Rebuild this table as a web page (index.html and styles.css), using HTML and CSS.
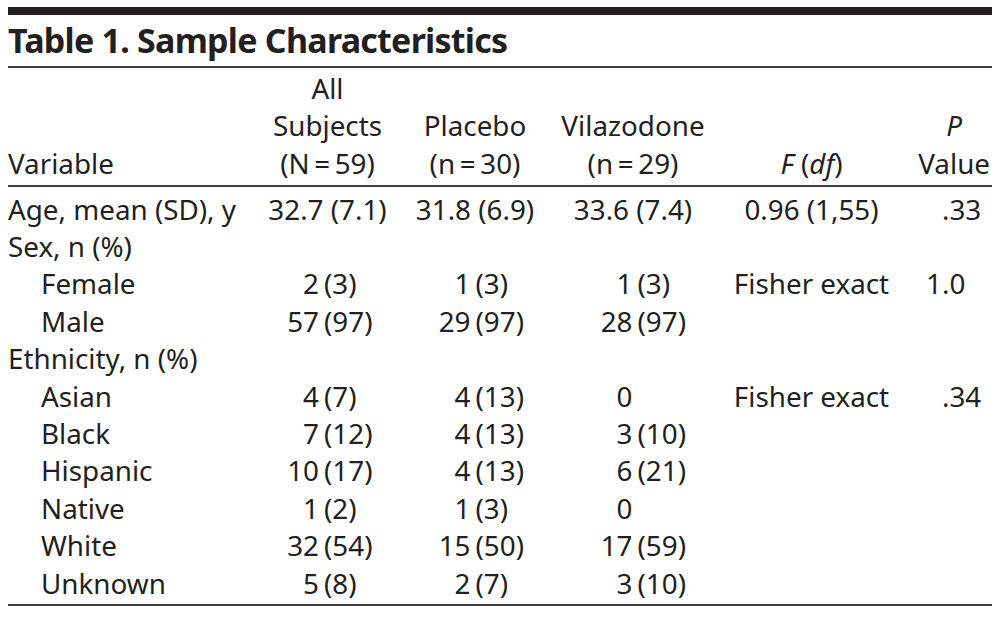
FILE: index.html
```html
<!DOCTYPE html>
<html lang="en">
<head>
<meta charset="utf-8">
<title>Table 1. Sample Characteristics</title>
<link rel="stylesheet" href="styles.css">
</head>
<body>
<div class="table">
  <div class="topbar"></div>
  <h1 class="title">Table 1. Sample Characteristics</h1>

  <div class="row head">
    <div class="cell">Variable</div>
    <div class="cell hc">All<br>Subjects<br>(N&thinsp;=&thinsp;59)</div>
    <div class="cell hc">Placebo<br>(n&thinsp;=&thinsp;30)</div>
    <div class="cell hc">Vilazodone<br>(n&thinsp;=&thinsp;29)</div>
    <div class="cell hc"><i>F</i> (<i>df</i>)</div>
    <div class="cell hp"><span class="pv"><i>P</i><span>Value</span></span></div>
  </div>

  <div class="tbody">
    <div class="row">
      <div class="cell">Age, mean (SD), y</div>
      <div class="cell c">32.7 (7.1)</div>
      <div class="cell c">31.8 (6.9)</div>
      <div class="cell c">33.6 (7.4)</div>
      <div class="cell c">0.96 (1,55)</div>
      <div class="cell dec"><span class="i"></span><span class="f">.33</span></div>
    </div>
    <div class="row">
      <div class="cell">Sex, n (%)</div>
      <div class="cell"></div><div class="cell"></div><div class="cell"></div><div class="cell"></div><div class="cell"></div>
    </div>
    <div class="row">
      <div class="cell ind">Female</div>
      <div class="cell num k1"><span class="n">2</span><span class="p">(3)</span></div>
      <div class="cell num k2"><span class="n">1</span><span class="p">(3)</span></div>
      <div class="cell num k3"><span class="n">1</span><span class="p">(3)</span></div>
      <div class="cell c">Fisher exact</div>
      <div class="cell dec"><span class="i">1</span><span class="f">.0</span></div>
    </div>
    <div class="row">
      <div class="cell ind">Male</div>
      <div class="cell num k1"><span class="n">57</span><span class="p">(97)</span></div>
      <div class="cell num k2"><span class="n">29</span><span class="p">(97)</span></div>
      <div class="cell num k3"><span class="n">28</span><span class="p">(97)</span></div>
      <div class="cell"></div><div class="cell"></div>
    </div>
    <div class="row">
      <div class="cell">Ethnicity, n (%)</div>
      <div class="cell"></div><div class="cell"></div><div class="cell"></div><div class="cell"></div><div class="cell"></div>
    </div>
    <div class="row">
      <div class="cell ind">Asian</div>
      <div class="cell num k1"><span class="n">4</span><span class="p">(7)</span></div>
      <div class="cell num k2"><span class="n">4</span><span class="p">(13)</span></div>
      <div class="cell num k3"><span class="n">0</span><span class="p"></span></div>
      <div class="cell c">Fisher exact</div>
      <div class="cell dec"><span class="i"></span><span class="f">.34</span></div>
    </div>
    <div class="row">
      <div class="cell ind">Black</div>
      <div class="cell num k1"><span class="n">7</span><span class="p">(12)</span></div>
      <div class="cell num k2"><span class="n">4</span><span class="p">(13)</span></div>
      <div class="cell num k3"><span class="n">3</span><span class="p">(10)</span></div>
      <div class="cell"></div><div class="cell"></div>
    </div>
    <div class="row">
      <div class="cell ind">Hispanic</div>
      <div class="cell num k1"><span class="n">10</span><span class="p">(17)</span></div>
      <div class="cell num k2"><span class="n">4</span><span class="p">(13)</span></div>
      <div class="cell num k3"><span class="n">6</span><span class="p">(21)</span></div>
      <div class="cell"></div><div class="cell"></div>
    </div>
    <div class="row">
      <div class="cell ind">Native</div>
      <div class="cell num k1"><span class="n">1</span><span class="p">(2)</span></div>
      <div class="cell num k2"><span class="n">1</span><span class="p">(3)</span></div>
      <div class="cell num k3"><span class="n">0</span><span class="p"></span></div>
      <div class="cell"></div><div class="cell"></div>
    </div>
    <div class="row">
      <div class="cell ind">White</div>
      <div class="cell num k1"><span class="n">32</span><span class="p">(54)</span></div>
      <div class="cell num k2"><span class="n">15</span><span class="p">(50)</span></div>
      <div class="cell num k3"><span class="n">17</span><span class="p">(59)</span></div>
      <div class="cell"></div><div class="cell"></div>
    </div>
    <div class="row">
      <div class="cell ind">Unknown</div>
      <div class="cell num k1"><span class="n">5</span><span class="p">(8)</span></div>
      <div class="cell num k2"><span class="n">2</span><span class="p">(7)</span></div>
      <div class="cell num k3"><span class="n">3</span><span class="p">(10)</span></div>
      <div class="cell"></div><div class="cell"></div>
    </div>
  </div>
</div>
</body>
</html>
```
FILE: styles.css
```css
html, body {
  margin: 0;
  padding: 0;
  background: #ffffff;
}

body {
  color: #231f20;
  font-family: "Noto Sans", "Open Sans", sans-serif;
  font-size: 27.8px;
  line-height: 37.4px;
}

.table {
  margin: 7px 0 0 8px;
  width: 984px;
}

.topbar {
  height: 8px;
  background: #231f20;
}

.title {
  margin: 0;
  padding: 4.8px 0 6.2px;
  font-size: 34px;
  line-height: 40px;
  font-weight: 700;
  letter-spacing: -0.75px;
  border-bottom: 2px solid #3d3d3d;
}

.row {
  display: grid;
  grid-template-columns: 247px 145px 150px 166px 191px 85px;
}

.head {
  padding: 1.8px 0 3px;
  border-bottom: 2px solid #3d3d3d;
  align-items: end;
}

.tbody {
  padding: 3.5px 0 2.5px;
  border-bottom: 2px solid #3d3d3d;
}

.cell {
  white-space: nowrap;
}

.hc {
  text-align: center;
}

.hp {
  display: flex;
  justify-content: flex-end;
  padding-right: 2px;
}

.pv {
  display: flex;
  flex-direction: column;
  align-items: center;
}

.c {
  text-align: center;
}

.ind {
  padding-left: 33px;
}

.num {
  display: grid;
}

.k1 { grid-template-columns: 64px 1fr; }
.k2 { grid-template-columns: 70.5px 1fr; }
.k3 { grid-template-columns: 82.5px 1fr; }

.n {
  text-align: right;
}

.p {
  padding-left: 5px;
}

.dec {
  display: grid;
  grid-template-columns: 35px 1fr;
}

.dec .i {
  text-align: right;
}
```
